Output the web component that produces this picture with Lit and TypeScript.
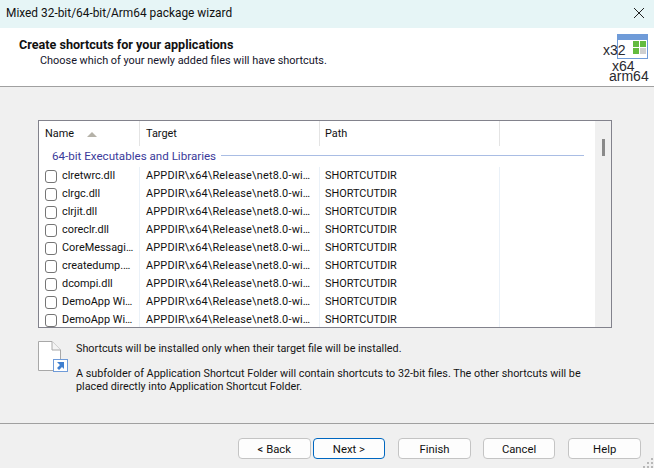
import { html, css, LitElement, svg } from "lit";
import { customElement } from "lit/decorators.js";

const rows = [
  "clretwrc.dll",
  "clrgc.dll",
  "clrjit.dll",
  "coreclr.dll",
  "CoreMessagi…",
  "createdump.…",
  "dcompi.dll",
  "DemoApp Wi…",
  "DemoApp Wi…",
];

const gripDots = [
  [8, 0],
  [4, 4],
  [8, 4],
  [0, 8],
  [4, 8],
  [8, 8],
];

@customElement("app-root")
export class AppRoot extends LitElement {
  static styles = css`
    :host {
      display: block;
      width: 654px;
      height: 468px;
      overflow: hidden;
      background: #f0f0f0;
      color: #111;
      position: relative;
      font: 10.9px/16px Roboto, sans-serif;
    }
    .Title {
      height: 28px;
      background: #e6f5f6;
      display: flex;
      align-items: center;
      justify-content: space-between;
      padding: 0 10px 2px 6px;
      box-sizing: border-box;
      font-size: 11.9px;
    }
    .Head {
      height: 58px;
      background: #fff;
      border-bottom: 1px solid #a0a0a0;
      display: flex;
      justify-content: space-between;
      position: relative;
    }
    .Head-text {
      padding: 9px 0 0 19px;
    }
    .Head-text b {
      display: block;
      font-size: 12.6px;
      font-weight: 700;
      color: #111;
    }
    .Head-text span {
      display: block;
      padding-left: 21px;
      color: #14142a;
    }
    .Logo {
      position: relative;
      width: 54px;
      height: 58px;
      font: 14px/16px "Liberation Sans", sans-serif;
      color: #2a2a30;
    }
    .Logo svg {
      position: absolute;
      left: 17px;
      top: 6px;
    }
    .Logo span {
      position: absolute;
      white-space: nowrap;
    }
    .X32 {
      left: 3px;
      top: 14px;
    }
    .X64 {
      left: 12px;
      top: 30px;
    }
    .Arm64 {
      left: 9px;
      top: 40px;
    }
    .Body {
      height: 337px;
      padding: 33px 42px 0 38px;
      box-sizing: border-box;
      border-bottom: 1px solid #a0a0a0;
    }
    .List {
      height: 208px;
      border: 1px solid #82828c;
      background: #fff;
      box-sizing: border-box;
      display: flex;
      overflow: hidden;
    }
    .Table {
      width: 556px;
    }
    .Track {
      width: 16px;
      margin-left: auto;
      background: #f0f0f0;
      position: relative;
    }
    .Thumb {
      position: absolute;
      left: 7px;
      top: 18px;
      width: 3px;
      height: 17px;
      background: #8a8a8a;
    }
    .Row {
      display: grid;
      grid-template-columns: 101px 180px 180px 95px;
      height: 18px;
      line-height: 18px;
    }
    .Row > div {
      border-right: 1px solid #eaf1f8;
      padding-left: 5px;
      white-space: nowrap;
      overflow: hidden;
    }
    .Row > div:last-child {
      border-right: none;
    }
    .Row > div:nth-child(1),
    .Row > div:nth-child(2) {
      padding-left: 6px;
    }
    .Row > .Name {
      display: flex;
      align-items: center;
      gap: 5px;
    }
    .Row .Target {
      letter-spacing: 0.2px;
    }
    .Box {
      width: 12px;
      height: 13px;
      box-sizing: border-box;
      border: 1px solid #757575;
      border-radius: 3px;
      background: #fff;
      flex: none;
    }
    .Header {
      height: 25px;
      line-height: 26px;
    }
    .Header > div {
      border-right: 1px solid #e4e4e4;
      position: relative;
    }
    .Arrow {
      position: absolute;
      left: 48px;
      top: 11px;
      width: 0;
      height: 0;
      border-left: 5px solid transparent;
      border-right: 5px solid transparent;
      border-bottom: 5px solid #b5b2a8;
    }
    .Group {
      height: 21px;
      box-sizing: border-box;
      display: flex;
      align-items: center;
      gap: 5px;
      padding: 0 11px 2px 13px;
      color: #3a3a9a;
      font-size: 11.6px;
    }
    .Group i {
      flex: 1;
      height: 1px;
      background: #a9bde4;
    }
    .Notes {
      display: flex;
      padding: 13px 0 0 0;
      line-height: 13px;
      font-size: 10.8px;
    }
    .Page {
      width: 38px;
      height: 32px;
      flex: none;
    }
    .Notes p {
      margin: 0;
      color: #141414;
    }
    .Notes .First {
      padding-top: 1px;
    }
    .Notes p + p {
      margin-top: 12px;
    }
    .Buttons {
      display: flex;
      padding: 14px 0 0 238px;
    }
    button {
      width: 73px;
      height: 21px;
      padding: 2px 0 0;
      font: inherit;
      font-size: 11.3px;
      color: #111;
      background: #fdfdfd;
      border: 1px solid #c4c4c4;
      border-radius: 4px;
      margin-right: 13px;
    }
    button.Back {
      margin-right: 2px;
    }
    button.Finish {
      margin-right: 12px;
    }
    button.Next {
      border-color: #0067c0;
    }
    .Grip {
      position: absolute;
      right: 1px;
      bottom: 0;
    }
  `;

  renderLogo() {
    return html`<div class="Logo">
      <svg width="31" height="25" viewBox="0 0 31 25">
        <rect x="0.5" y="0.5" width="30" height="24" fill="#fff" stroke="#6f9bd8" />
        <rect x="0" y="0" width="31" height="6" fill="#6f9bd8" />
        ${svg`
          <rect x="16" y="7" width="6" height="6" fill="#63bb3f" />
          <rect x="23" y="7" width="6" height="6" fill="#63bb3f" />
          <rect x="16" y="14" width="6" height="6" fill="#63bb3f" />
          <rect x="23" y="14" width="6" height="6" fill="#cfcfcf" />
        `}
      </svg>
      <span class="X32">x32</span>
      <span class="X64">x64</span>
      <span class="Arm64">arm64</span>
    </div>`;
  }

  render() {
    return html`
      <div class="Title">
        <span>Mixed 32-bit/64-bit/Arm64 package wizard</span>
        <svg width="10" height="10" viewBox="0 0 10 10">
          <path d="M0 0 L10 10 M10 0 L0 10" stroke="#222" stroke-width="1" />
        </svg>
      </div>
      <div class="Head">
        <div class="Head-text">
          <b>Create shortcuts for your applications</b>
          <span>Choose which of your newly added files will have shortcuts.</span>
        </div>
        ${this.renderLogo()}
      </div>
      <div class="Body">
        <div class="List">
          <div class="Table">
            <div class="Row Header">
              <div>Name<span class="Arrow"></span></div>
              <div>Target</div>
              <div>Path</div>
              <div></div>
            </div>
            <div class="Group">64-bit Executables and Libraries<i></i></div>
            ${rows.map(
              (name) => html`<div class="Row">
                <div class="Name"><span class="Box"></span>${name}</div>
                <div class="Target">APPDIR\\x64\\Release\\net8.0-wi…</div>
                <div>SHORTCUTDIR</div>
                <div></div>
              </div>`
            )}
          </div>
          <div class="Track"><div class="Thumb"></div></div>
        </div>
        <div class="Notes">
          <svg class="Page" viewBox="0 0 38 32">
            <path d="M0.5 0.5 H14 L22.5 9 V29.5 H0.5 Z" fill="#fff" stroke="#a8a8a8" />
            <path d="M14 0.5 V9 H22.5" fill="#f4f4f4" stroke="#a8a8a8" />
            <rect x="15.5" y="18.5" width="14" height="12" fill="#fff" stroke="#6f9bd8" />
            <path d="M19 21 H26 V28 L24 26 L21 29 L19 27 L22 24 Z" fill="#3f7fd0" />
          </svg>
          <div>
            <p class="First">Shortcuts will be installed only when their target file will be installed.</p>
            <p>
              A subfolder of Application Shortcut Folder will contain shortcuts to 32-bit files. The other shortcuts will be<br />placed directly into Application Shortcut Folder.
            </p>
          </div>
        </div>
      </div>
      <div class="Buttons">
        <button class="Back">&lt; Back</button>
        <button class="Next">Next &gt;</button>
        <button class="Finish">Finish</button>
        <button>Cancel</button>
        <button>Help</button>
      </div>
      <svg class="Grip" width="10" height="10" viewBox="0 0 10 10">
        ${gripDots.map(([x, y]) => svg`<rect x=${x} y=${y} width="2" height="2" fill="#b8b8b8" />`)}
      </svg>
    `;
  }
}
